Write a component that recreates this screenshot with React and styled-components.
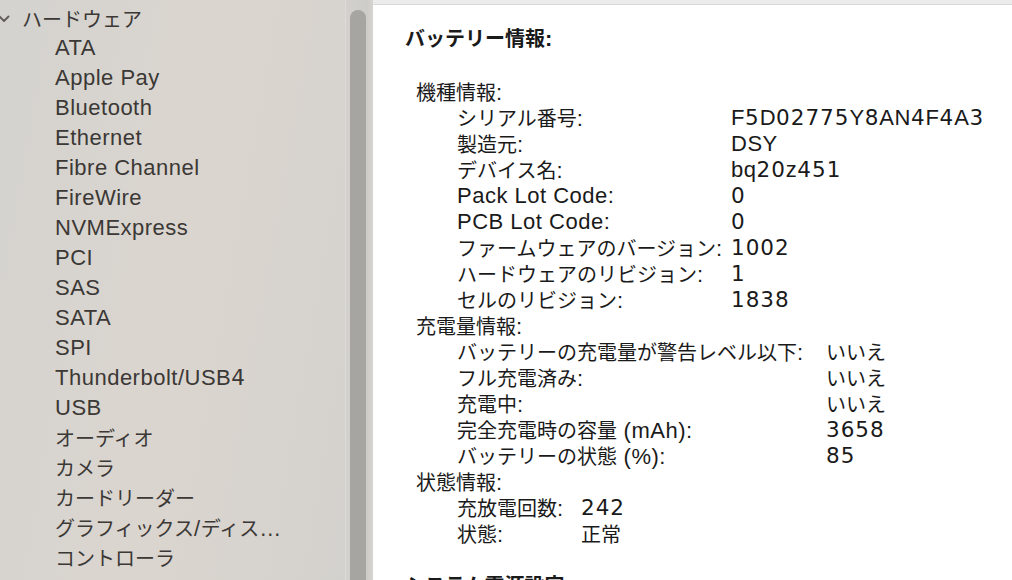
import React from "react";
import styled, { createGlobalStyle } from "styled-components";

const GlobalStyle = createGlobalStyle`
  html, body {
    margin: 0;
    padding: 0;
    background: #ffffff;
    overflow: hidden;
  }
  body {
    font-family: "Liberation Sans", "Noto Sans CJK JP", sans-serif;
  }
`;

// macOS renders this with Hiragino: japanese smaller, latin larger, digits wide.
// split each string into runs so every run gets its own font
const RUNS = /([\u3000-\u30ff\u3400-\u9fff\uff00-\uffef]+|[0-9]+)/;
const IS_CJK = /^[\u3000-\u30ff\u3400-\u9fff\uff00-\uffef]+$/;
const IS_NUM = /^[0-9]+$/;

const Latin = styled.span`
  font-family: "Liberation Sans", sans-serif;
  font-size: 22px;
  letter-spacing: 0.5px;
`;

const Num = styled.span`
  font-family: "DejaVu Sans", sans-serif;
  font-size: 21.5px;
  letter-spacing: 1px;
`;

const Jp = styled.span`
  font-family: "Noto Sans CJK JP", sans-serif;
  font-size: 20px;
  letter-spacing: 0;
`;

const Txt = ({ children }) =>
  String(children)
    .split(RUNS)
    .filter(Boolean)
    .map((part, i) => {
      if (IS_CJK.test(part)) return <Jp key={i}>{part}</Jp>;
      if (IS_NUM.test(part)) return <Num key={i}>{part}</Num>;
      return <Latin key={i}>{part}</Latin>;
    });

const Window = styled.div`
  display: flex;
  width: 1012px;
  height: 580px;
  overflow: hidden;
`;

const Sidebar = styled.aside`
  display: flex;
  flex: none;
  width: 373px;
  height: 100%;
  background: linear-gradient(100deg, #d4d3cf 0%, #dbd5cf 50%, #d7d3ce 75%, #d2d1cd 100%);
`;

const NavList = styled.ul`
  flex: 1;
  margin: 0;
  padding: 3px 0 0 0;
  list-style: none;
  overflow: hidden;
  color: #3b3835;
`;

const NavHeader = styled.li`
  display: flex;
  align-items: center;
  height: 30px;
  white-space: nowrap;
`;

const Chevron = styled.svg`
  flex: none;
  width: 12px;
  height: 10px;
  margin: 2px 12px 0 -2px;
`;

const NavItem = styled.li`
  height: 30px;
  line-height: 30px;
  padding-left: 55px;
  white-space: nowrap;
`;

const ScrollTrack = styled.div`
  flex: none;
  width: 23px;
  padding: 10px 0 0 4px;
  background: linear-gradient(90deg, #d2d1cd 0%, #cdccc8 80%, #d6d5d1 100%);
  border-left: 1px solid #dcdbd7;
`;

const ScrollThumb = styled.div`
  width: 16px;
  height: 100%;
  border-radius: 8px 8px 0 0;
  background: #a6a5a2;
`;

const Content = styled.main`
  display: flex;
  flex-direction: column;
  flex: 1;
  min-width: 0;
  background: #ffffff;
  color: #1a1a1a;
`;

const TopBar = styled.div`
  flex: none;
  height: 4px;
  background: #ececec;
  border-bottom: 1px solid #d8d8d8;
`;

const Body = styled.div`
  padding: 20px 0 0 32px;
`;

const Title = styled.div`
  height: 26px;
  line-height: 26px;
  font-weight: 700;
  white-space: nowrap;
  margin-top: ${p => p.$gap || 0}px;

  span {
    font-weight: 700;
  }
`;

const Section = styled.section`
  padding-left: 11px;

  &:first-of-type {
    margin-top: 28px;
  }
`;

const SectionLabel = styled.div`
  height: 26px;
  line-height: 26px;
  white-space: nowrap;
`;

const Grid = styled.div`
  display: grid;
  grid-template-columns: ${p => p.$labelWidth}px auto;
  grid-auto-rows: 26px;
  padding-left: 41px;
  line-height: 26px;
  white-space: nowrap;
`;

const Cell = styled.div`
  height: 26px;
`;

const hardware = [
  "ATA",
  "Apple Pay",
  "Bluetooth",
  "Ethernet",
  "Fibre Channel",
  "FireWire",
  "NVMExpress",
  "PCI",
  "SAS",
  "SATA",
  "SPI",
  "Thunderbolt/USB4",
  "USB",
  "オーディオ",
  "カメラ",
  "カードリーダー",
  "グラフィックス/ディス…",
  "コントローラ",
  "ストレージ",
];

const sections = [
  {
    label: "機種情報:",
    labelWidth: 274,
    rows: [
      ["シリアル番号:", "F5D02775Y8AN4F4A3"],
      ["製造元:", "DSY"],
      ["デバイス名:", "bq20z451"],
      ["Pack Lot Code:", "0"],
      ["PCB Lot Code:", "0"],
      ["ファームウェアのバージョン:", "1002"],
      ["ハードウェアのリビジョン:", "1"],
      ["セルのリビジョン:", "1838"],
    ],
  },
  {
    label: "充電量情報:",
    labelWidth: 369,
    rows: [
      ["バッテリーの充電量が警告レベル以下:", "いいえ"],
      ["フル充電済み:", "いいえ"],
      ["充電中:", "いいえ"],
      ["完全充電時の容量 (mAh):", "3658"],
      ["バッテリーの状態 (%):", "85"],
    ],
  },
  {
    label: "状態情報:",
    labelWidth: 124,
    rows: [
      ["充放電回数:", "242"],
      ["状態:", "正常"],
    ],
  },
];

export default function App() {
  return (
    <>
      <GlobalStyle />
      <Window>
        <Sidebar>
          <NavList>
            <NavHeader>
              <Chevron viewBox="0 0 12 10">
                <polyline
                  points="1.5,2.5 6,7 10.5,2.5"
                  fill="none"
                  stroke="#5f5b57"
                  strokeWidth="1.8"
                  strokeLinecap="round"
                  strokeLinejoin="round"
                />
              </Chevron>
              <Txt>ハードウェア</Txt>
            </NavHeader>
            {hardware.map(name => (
              <NavItem key={name}>
                <Txt>{name}</Txt>
              </NavItem>
            ))}
          </NavList>
          <ScrollTrack>
            <ScrollThumb />
          </ScrollTrack>
        </Sidebar>

        <Content>
          <TopBar />
          <Body>
            <Title>
              <Txt>バッテリー情報:</Txt>
            </Title>
            {sections.map(section => (
              <Section key={section.label}>
                <SectionLabel>
                  <Txt>{section.label}</Txt>
                </SectionLabel>
                <Grid $labelWidth={section.labelWidth}>
                  {section.rows.map(([label, value]) => (
                    <React.Fragment key={label}>
                      <Cell>
                        <Txt>{label}</Txt>
                      </Cell>
                      <Cell>
                        <Txt>{value}</Txt>
                      </Cell>
                    </React.Fragment>
                  ))}
                </Grid>
              </Section>
            ))}
            <Title $gap={25}>
              <Txt>システム電源設定:</Txt>
            </Title>
          </Body>
        </Content>
      </Window>
    </>
  );
}
